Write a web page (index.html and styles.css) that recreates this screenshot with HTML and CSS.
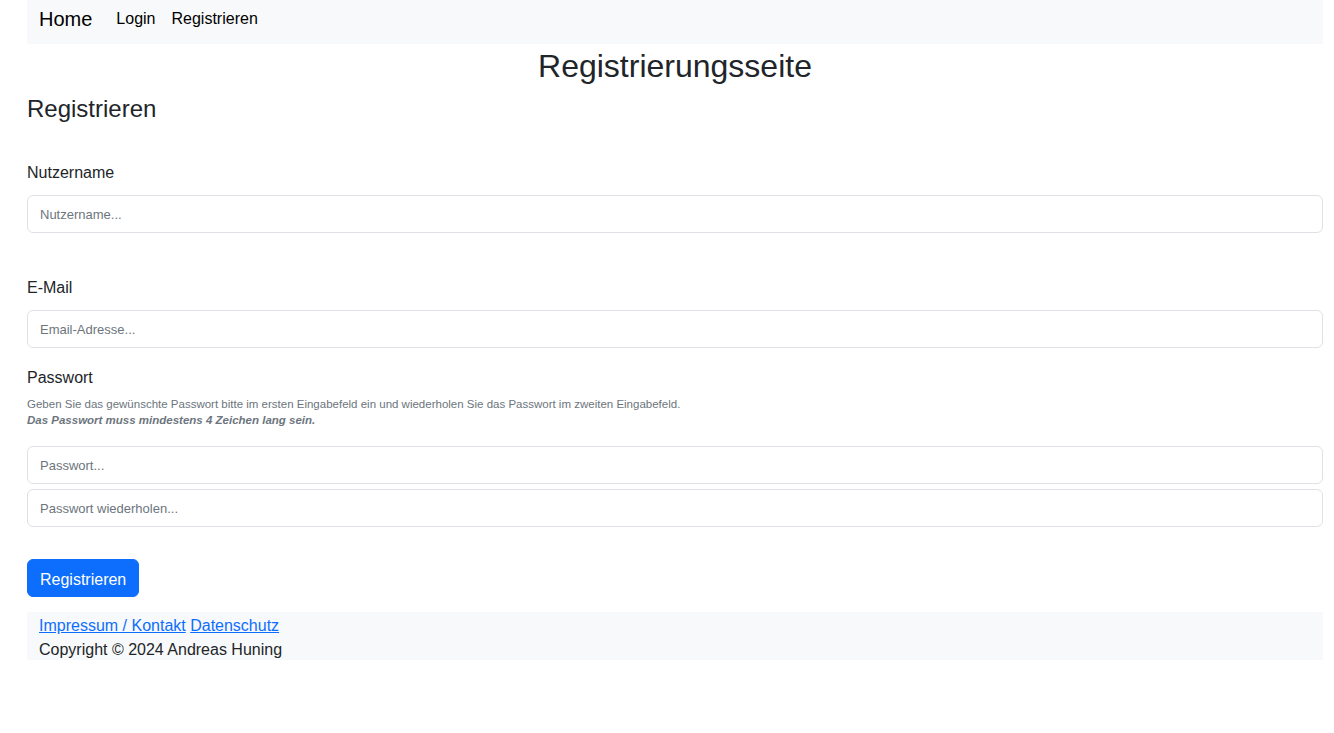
FILE: index.html
```html
<!DOCTYPE html>
<html lang="de">
<head>
<meta charset="utf-8">
<title>Registrierungsseite</title>
<link rel="stylesheet" href="styles.css">
</head>
<body>
<div class="page">
  <nav class="navbar">
    <a class="brand" href="#">Home</a>
    <a class="nav-link" href="#">Login</a>
    <a class="nav-link" href="#">Registrieren</a>
  </nav>
  <h1 class="title">Registrierungsseite</h1>
  <h2 class="subtitle">Registrieren</h2>
  <form class="form">
    <div class="group group-user">
      <label class="label" for="user">Nutzername</label>
      <input class="input" id="user" type="text" placeholder="Nutzername...">
    </div>
    <div class="group group-mail">
      <label class="label" for="mail">E-Mail</label>
      <input class="input" id="mail" type="email" placeholder="Email-Adresse...">
    </div>
    <div class="group group-pass">
      <label class="label" for="pw">Passwort</label>
      <p class="hint">Geben Sie das gewünschte Passwort bitte im ersten Eingabefeld ein und wiederholen Sie das Passwort im zweiten Eingabefeld.<br><b><i>Das Passwort muss mindestens 4 Zeichen lang sein.</i></b></p>
      <input class="input" id="pw" type="password" placeholder="Passwort...">
      <input class="input input-repeat" id="pw2" type="password" placeholder="Passwort wiederholen...">
    </div>
    <button class="btn" type="submit">Registrieren</button>
  </form>
  <footer class="footer">
    <div><a class="flink" href="#">Impressum / Kontakt</a> <a class="flink" href="#">Datenschutz</a></div>
    <div>Copyright © 2024 Andreas Huning</div>
  </footer>
</div>
</body>
</html>
```

FILE: styles.css
```css
* { box-sizing: border-box; }
html, body { margin: 0; padding: 0; background: #fff; }
body {
  font-family: "Liberation Sans", Arial, sans-serif;
  font-size: 16px;
  line-height: 1.5;
  color: #212529;
}
.page {
  padding: 0 11px 0 27px;
}
.navbar {
  height: 44px;
  background: #f8f9fa;
  display: flex;
  align-items: center;
  padding: 0 12px 7px;
}
.brand {
  font-size: 20px;
  color: #000;
  text-decoration: none;
  margin-right: 16px;
  line-height: 1.5;
}
.nav-link {
  color: #000;
  text-decoration: none;
  padding: 0 8px;
  font-size: 16px;
}
.title {
  margin: 3px 0 0;
  font-size: 32px;
  font-weight: 400;
  line-height: 1.2;
  text-align: center;
}
.subtitle {
  margin: 10px 0 0;
  font-size: 24px;
  font-weight: 400;
  line-height: 1.2;
}
.form { display: flex; flex-direction: column; align-items: flex-start; }
.group { width: 100%; display: flex; flex-direction: column; }
.group-user { margin-top: 37px; }
.group-mail { margin-top: 43px; }
.group-pass { margin-top: 18px; }
.label { display: block; margin-bottom: 10px; }
.group-pass .label { margin-bottom: 6px; }
.hint {
  margin: 0 0 18px;
  font-size: 11.5px;
  line-height: 16px;
  color: #6c757d;
}
.input {
  display: block;
  width: 100%;
  height: 38px;
  padding: 0 12px;
  font-family: inherit;
  font-size: 13px;
  color: #212529;
  background: #fff;
  border: 1px solid #dee2e6;
  border-radius: 6px;
}
.input::placeholder { color: #6c757d; font-weight: 300; }
.input-repeat { margin-top: 5px; }
.btn {
  margin-top: 32px;
  height: 38px;
  padding: 3px 12px 0;
  font-family: inherit;
  font-size: 16px;
  color: #fff;
  background: #0d6efd;
  border: 1px solid #0d6efd;
  border-radius: 6px;
}
.footer {
  margin-top: 15px;
  height: 48px;
  background: #f8f9fa;
  padding: 2px 12px 0;
  line-height: 24px;
}
.flink { color: #0d6efd; text-decoration: underline; }
```
